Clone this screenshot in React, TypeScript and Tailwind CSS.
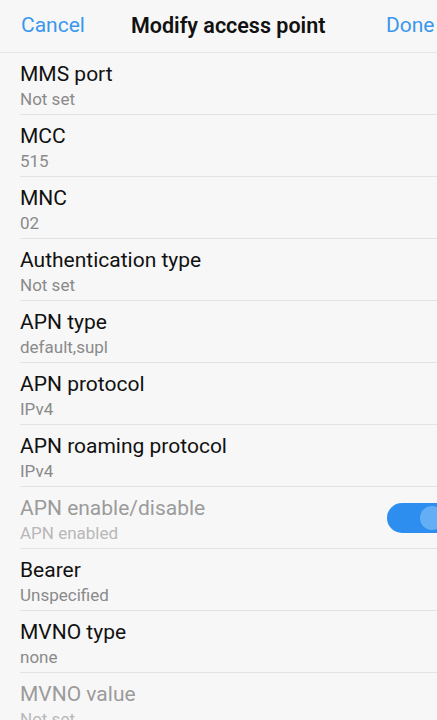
const rows = [
    { title: "MMS port", value: "Not set" },
    { title: "MCC", value: "515" },
    { title: "MNC", value: "02" },
    { title: "Authentication type", value: "Not set" },
    { title: "APN type", value: "default,supl" },
    { title: "APN protocol", value: "IPv4" },
    { title: "APN roaming protocol", value: "IPv4" },
    { title: "APN enable/disable", value: "APN enabled", disabled: true, toggle: true },
    { title: "Bearer", value: "Unspecified" },
    { title: "MVNO type", value: "none" },
    { title: "MVNO value", value: "Not set", disabled: true },
];

const App = () => {
    return (
        <div className="h-[720px] w-[437px] overflow-hidden bg-[#f7f7f7] font-['Roboto',sans-serif]">
            <header className="flex h-[53px] items-center whitespace-nowrap pl-[21px] border-b border-[#e6e6e6]">
                <span className="w-[110px] shrink-0 text-[21px] text-[#3a97ee]">Cancel</span>
                <span className="w-[255px] shrink-0 text-[21.5px] font-semibold text-[#111]">Modify access point</span>
                <span className="shrink-0 text-[21px] text-[#3a97ee]">Done</span>
            </header>
            <ul className="pl-[20px]">
                {rows.map((row, i) => (
                    <li
                        key={i}
                        className="flex h-[62px] items-center justify-between border-b border-[#e3e3e3]"
                    >
                        <div className="flex flex-col pt-[4px] whitespace-nowrap">
                            <span
                                className={`text-[21px] leading-[26px] ${
                                    row.disabled ? "text-[#9b9b9b]" : "text-[#111]"
                                }`}
                            >
                                {row.title}
                            </span>
                            <span
                                className={`text-[17px] leading-[24px] ${
                                    row.disabled ? "text-[#b8b8b8]" : "text-[#8a8a8a]"
                                }`}
                            >
                                {row.value}
                            </span>
                        </div>
                        {row.toggle && (
                            <div className="relative -mr-[20px] h-[30px] w-[70px] shrink-0 rounded-full bg-[#2d8ef0]">
                                <div className="absolute left-[33px] top-[3px] h-[24px] w-[24px] rounded-full bg-[#64aef5]" />
                            </div>
                        )}
                    </li>
                ))}
            </ul>
        </div>
    );
};

export default App;
